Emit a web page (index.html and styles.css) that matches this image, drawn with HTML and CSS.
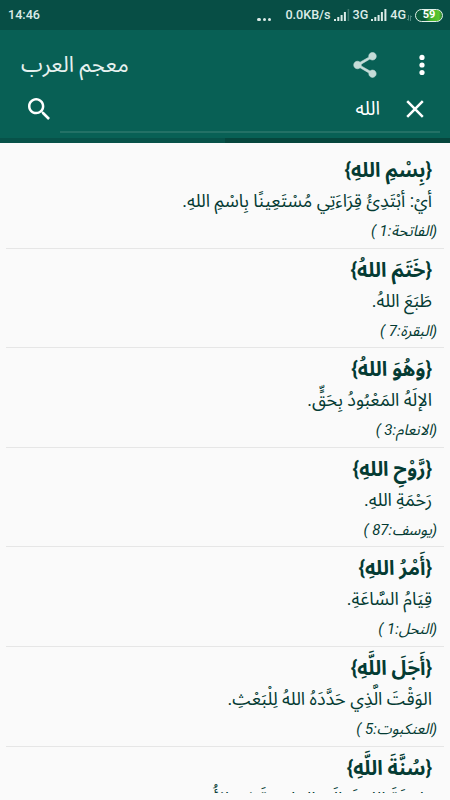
FILE: index.html
```html
<!DOCTYPE html>
<html lang="ar" dir="rtl">

<head>
    <meta charset="UTF-8">
    <meta name="viewport" content="width=device-width, initial-scale=1.0">
    <title>معجم العرب</title>
    <link rel="stylesheet" href="styles.css">
</head>

<body>
    <div class="status-bar" dir="ltr">
        <span class="clock">14:46</span>
        <span class="dots"><i></i><i></i><i></i></span>
        <span class="speed">0.0KB/s</span>
        <svg class="signal" viewBox="0 0 16 12" width="16" height="12">
            <path d="M0 10h2v2H0zM3.3 8h2v4h-2zM6.6 6h2v6h-2zM9.9 3h2v9h-2z" fill="#dcebe8" />
            <path d="M13.6 0h1.6v12h-1.6z" fill="#3f7a70" />
        </svg>
        <span class="net">3G</span>
        <svg class="signal" viewBox="0 0 16 12" width="16" height="12">
            <path d="M0 10h2v2H0zM3.3 8h2v4h-2zM6.6 6h2v6h-2zM9.9 3h2v9h-2zM13.4 0h2v12h-2z" fill="#dcebe8" />
        </svg>
        <span class="net">4G</span>
        <svg class="arrows" viewBox="0 0 5 6" width="5" height="6">
            <path d="M1.5 0v5M0 4l1.5 1.5M3.5 6V1M5 2L3.5.5" stroke="#5d978d" stroke-width=".8" fill="none" />
        </svg>
        <span class="battery"><b>59</b></span>
    </div>

    <header class="app-bar">
        <div class="title-row" dir="ltr">
            <h1 class="title"><span dir="rtl">معجم العرب</span></h1>
            <svg class="share" viewBox="0 0 24 24" width="30" height="30">
                <path d="M18 16.08c-.76 0-1.44.3-1.96.77L8.91 12.7c.05-.23.09-.46.09-.7s-.04-.47-.09-.7l7.05-4.11c.54.5 1.25.81 2.04.81 1.66 0 3-1.34 3-3s-1.34-3-3-3-3 1.34-3 3c0 .24.04.47.09.7L8.04 9.81C7.5 9.31 6.79 9 6 9c-1.66 0-3 1.34-3 3s1.34 3 3 3c.79 0 1.5-.31 2.04-.81l7.12 4.16c-.05.21-.08.43-.08.65 0 1.61 1.31 2.92 2.92 2.92s2.92-1.31 2.92-2.92-1.31-2.92-2.92-2.92z" fill="#c5dcd8" stroke="#c5dcd8" stroke-width=".5" />
            </svg>
            <svg class="more" viewBox="0 0 6 22" width="6" height="22">
                <circle cx="3" cy="3.4" r="2.6" fill="#fff" />
                <circle cx="3" cy="11" r="2.6" fill="#fff" />
                <circle cx="3" cy="18.5" r="2.6" fill="#fff" />
            </svg>
        </div>
        <div class="search-row" dir="ltr">
            <svg class="search-icon" viewBox="3 3 17.5 17.5" width="22" height="22">
                <path d="M15.5 14h-.79l-.28-.27C15.41 12.59 16 11.11 16 9.5 16 5.91 13.09 3 9.5 3S3 5.91 3 9.5 5.91 16 9.5 16c1.61 0 3.09-.59 4.23-1.57l.27.28v.79l5 4.99L20.49 19l-4.99-5zm-6 0C7.01 14 5 11.99 5 9.5S7.01 5 9.5 5 14 7.01 14 9.5 11.99 14 9.5 14z" fill="#fff" />
            </svg>
            <div class="search-field">
                <span class="query" dir="rtl">الله</span>
                <svg class="clear" viewBox="0 0 18 18" width="18" height="18">
                    <path d="M1.2 1.2l15.6 15.6M16.8 1.2L1.2 16.8" stroke="#fff" stroke-width="2.5" />
                </svg>
            </div>
        </div>
        <div class="tabs"><span class="tab"></span><span class="tab active"></span></div>
    </header>

    <main class="results">
        <article class="entry">
            <h2 class="term">{بِسْمِ اللهِ}</h2>
            <p class="meaning">أيْ: أبْتَدِئُ قِرَاءَتِي مُسْتَعِينًا بِاسْمِ اللهِ.</p>
            <p class="source">(الفاتحة:1 )</p>
        </article>
        <article class="entry">
            <h2 class="term">{خَتَمَ اللهُ}</h2>
            <p class="meaning">طَبَعَ اللهُ.</p>
            <p class="source">(البقرة:7 )</p>
        </article>
        <article class="entry">
            <h2 class="term">{وَهُوَ اللهُ}</h2>
            <p class="meaning">الإلَهُ المَعْبُودُ بِحَقٍّ.</p>
            <p class="source">(الانعام:3 )</p>
        </article>
        <article class="entry">
            <h2 class="term">{رَّوْحِ اللهِ}</h2>
            <p class="meaning">رَحْمَةِ اللهِ.</p>
            <p class="source">(يوسف:87 )</p>
        </article>
        <article class="entry">
            <h2 class="term">{أَمْرُ اللهِ}</h2>
            <p class="meaning">قِيَامُ السَّاعَةِ.</p>
            <p class="source">(النحل:1 )</p>
        </article>
        <article class="entry">
            <h2 class="term">{أَجَلَ اللَّهِ}</h2>
            <p class="meaning">الوَقْتَ الَّذِي حَدَّدَهُ اللهُ لِلْبَعْثِ.</p>
            <p class="source">(العنكبوت:5 )</p>
        </article>
        <article class="entry">
            <h2 class="term">{سُنَّةَ اللَّهِ}</h2>
            <p class="meaning">طَرِيقَةَ اللهِ تَعَالَى المَاضِيَةَ فِي الأُمَمِ.</p>
        </article>
    </main>
</body>

</html>
```
FILE: styles.css
```css
:root {
    --bar-color: #086055;
    --status-color: #074e45;
    --text-color: #043b33;
    --page-bg: #fafafa;
}

* {
    box-sizing: border-box;
}

body {
    margin: 0;
    height: 800px;
    overflow: hidden;
    display: flex;
    flex-direction: column;
    background: var(--page-bg);
    color: var(--text-color);
    font-family: Roboto, "Noto Sans Arabic", "DejaVu Sans", sans-serif;
}

h1, h2, p {
    margin: 0;
    font-weight: normal;
}

.status-bar {
    height: 30px;
    flex: none;
    display: flex;
    align-items: center;
    padding: 0 7px 0 8px;
    background: var(--status-color);
    color: #dcebe8;
    font: 500 12.6px/30px Roboto, sans-serif;
}

.dots {
    display: flex;
    gap: 1.5px;
    margin: 9px 14px 0 auto;
}

.dots i {
    width: 3.7px;
    height: 3.7px;
    border-radius: 50%;
    background: #dcebe8;
}

.signal {
    margin: 0 3px;
}

.arrows {
    margin: 5px 3px 0 1px;
}

.battery {
    width: 28px;
    height: 13px;
    border: 1.5px solid #e3f1ea;
    border-radius: 7px;
    background: linear-gradient(90deg, #0a5a3c 0 35%, #43b02a 55%, #5cc62e 88%, #2c7d38);
    color: #fff;
    font-size: 11px;
    line-height: 10px;
    text-align: center;
}

.app-bar {
    height: 113px;
    flex: none;
    background: var(--bar-color);
    color: #fff;
}

.title-row {
    height: 68px;
    display: flex;
    align-items: center;
    padding: 2px 25px 0 21px;
}

.title {
    font-size: 22px;
    line-height: 40px;
    color: #e6f1ef;
    margin-right: auto;
}

.share {
    margin-right: 39px;
}

.search-row {
    height: 40px;
    display: flex;
    align-items: center;
    padding: 0 10px 5px 28px;
}

.search-icon {
    margin: 0 10px 13px 0;
}

.search-field {
    flex: 1;
    height: 35px;
    display: flex;
    align-items: center;
    justify-content: flex-end;
    gap: 26px;
    padding: 0 16px 11px 0;
    border-bottom: 2px solid #237166;
}

.query {
    font-size: 19px;
    line-height: 24px;
}

.tabs {
    display: flex;
    flex-direction: row-reverse;
    height: 5px;
}

.tab {
    flex: 1;
    background: #06463d;
}

.tab:first-child {
    background: #06463d;
}

.tab.active {
    background: #075249;
}

.tabs {
    flex-direction: row;
}

.results {
    height: 650px;
    flex: none;
    overflow: hidden;
    padding: 6px 6px 0;
}

.entry {
    height: 99.6px;
    border-bottom: 1px solid #e6e6e6;
}

.term, .meaning, .source {
    white-space: nowrap;
}

.term {
    height: 38px;
    padding-right: 12px;
    font-size: 20px;
    font-weight: bold;
    line-height: 43px;
}

.meaning {
    height: 30px;
    padding-right: 12px;
    font-size: 18px;
    line-height: 28px;
}

.source {
    padding-right: 7px;
    font-size: 15px;
    font-style: italic;
    line-height: 28px;
}
```
